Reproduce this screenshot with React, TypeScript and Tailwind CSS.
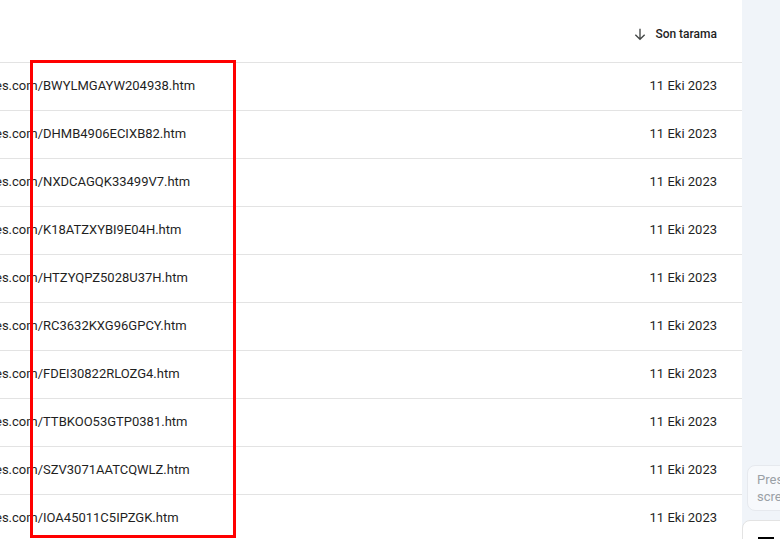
const rows = [
  "BWYLMGAYW204938.htm",
  "DHMB4906ECIXB82.htm",
  "NXDCAGQK33499V7.htm",
  "K18ATZXYBI9E04H.htm",
  "HTZYQPZ5028U37H.htm",
  "RC3632KXG96GPCY.htm",
  "FDEI30822RLOZG4.htm",
  "TTBKOO53GTP0381.htm",
  "SZV3071AATCQWLZ.htm",
  "IOA45011C5IPZGK.htm",
];

function ArrowDown() {
  return (
    <svg width="16" height="16" viewBox="0 0 24 24" fill="none" stroke="#444746" strokeWidth="2">
      <path d="M12 4v16M5 13l7 7 7-7" />
    </svg>
  );
}

export default function App() {
  return (
    <div className="relative flex h-[539px] w-[780px] overflow-hidden bg-[#f0f4f9] font-['Roboto',sans-serif]">
      <div className="w-[742px] shrink-0 bg-white">
        <div className="flex h-[63px] items-center justify-end gap-[7px] border-b border-[#e3e3e3] pr-[25px] pt-[6px] text-[12px] font-medium text-[#1f1f1f]">
          <ArrowDown />
          <span>Son tarama</span>
        </div>
        {rows.map((r) => (
          <div
            key={r}
            className="flex h-[48px] items-center justify-between overflow-hidden border-b border-[#e3e3e3] pb-[2px] pr-[25px] text-[13px] text-[#1f1f1f]"
          >
            <span className="-ml-[5px] whitespace-nowrap">es.com/{r}</span>
            <span>11 Eki 2023</span>
          </div>
        ))}
      </div>
      <div className="flex flex-1 flex-col pt-[465px]">
        <div className="ml-[5px] h-[46px] w-[60px] shrink-0 overflow-hidden whitespace-nowrap rounded-lg border border-[#e6e9ee] bg-[#f7f9fc] px-[9px] py-[5px] text-[13px] leading-[17px] text-[#9aa0a6]">
          Press
          <br />
          screen
        </div>
        <div className="mt-[9px] flex h-[40px] w-[60px] shrink-0 justify-start rounded-tl-lg border border-[#e3e3e3] bg-white pl-[15px] pt-[16px]">
          <div className="h-[6px] w-[16px] bg-black" />
        </div>
      </div>
      <div className="absolute left-[30px] top-[60px] h-[478px] w-[206px] border-[3px] border-[#ff0000]" />
    </div>
  );
}
